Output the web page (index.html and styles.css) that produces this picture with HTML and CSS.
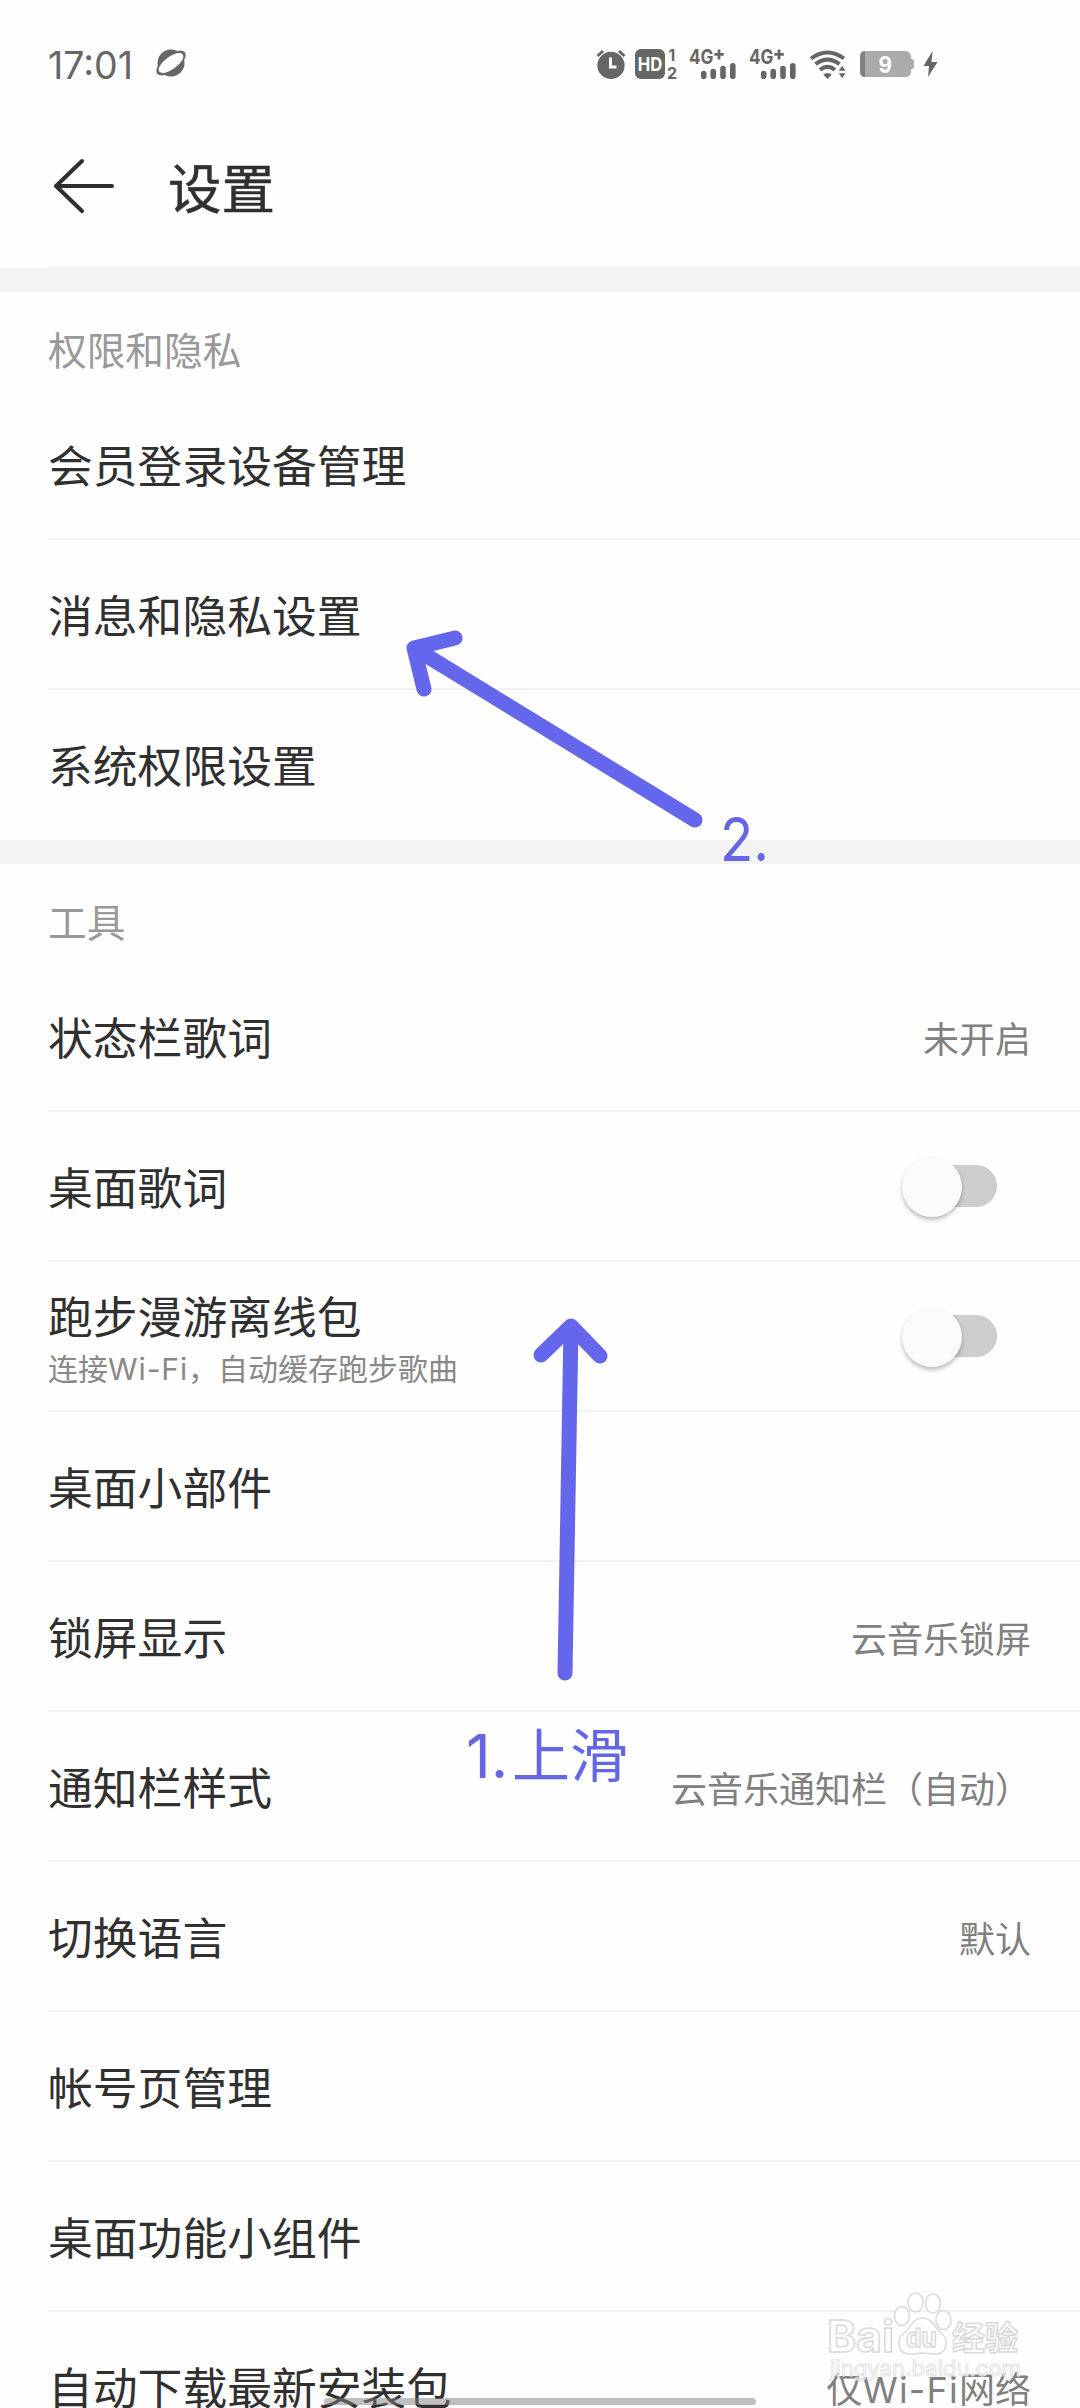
FILE: index.html
```html
<!DOCTYPE html>
<html lang="zh-CN">
<head>
    <meta charset="UTF-8">
    <meta name="viewport" content="width=device-width, initial-scale=1.0">
    <title>设置</title>
    <link rel="stylesheet" href="styles.css">
</head>
<body>
    <div class="status-bar">
        <span class="time">17:01</span>
        <svg class="planet" width="30" height="28" viewBox="0 0 30 28">
            <circle cx="15" cy="14" r="13.5" fill="#666"/>
            <ellipse cx="15" cy="14" rx="17.5" ry="8" transform="rotate(-38 15 14)" fill="#666"/>
            <ellipse cx="15" cy="14" rx="14.5" ry="6.3" transform="rotate(-36 15 14)" fill="#fff"/>
        </svg>
        <div class="status-icons">
            <svg class="alarm" width="30" height="30" viewBox="0 0 30 30">
                <circle cx="15" cy="16.4" r="13.6" fill="#666"/>
                <path d="M1.5 7L7 2M28.5 7L23 2" stroke="#666" stroke-width="3" fill="none"/>
                <path d="M14.5 8.5V18H20.5" stroke="#fff" stroke-width="3" fill="none"/>
            </svg>
            <svg class="hd" width="44" height="30" viewBox="0 0 44 30">
                <rect width="30" height="30" rx="6" fill="#666"/>
                <text x="2.7" y="21.6" font-size="18.5" textLength="24.5" lengthAdjust="spacingAndGlyphs" fill="#fff">HD</text>
                <text x="33.5" y="11.5" font-size="15.5">1</text>
                <text x="32" y="29.5" font-size="16">2</text>
            </svg>
            <svg class="signal" width="48" height="30" viewBox="0 0 48 30">
                <text x="0" y="14.5" font-size="20" textLength="24.5" lengthAdjust="spacingAndGlyphs">4G</text>
                <path d="M30 0.5V10.5M25.3 5.3H34.8" stroke="#666" stroke-width="2.8"/>
                <path d="M14.7 24.5V27.2M24.2 22.6V27.2M34 19.5V27.2M43.8 16.8V27.2" stroke="#666" stroke-width="5.6" stroke-linecap="round"/>
            </svg>
            <svg class="signal" width="48" height="30" viewBox="0 0 48 30">
                <text x="0" y="14.5" font-size="20" textLength="24.5" lengthAdjust="spacingAndGlyphs">4G</text>
                <path d="M30 0.5V10.5M25.3 5.3H34.8" stroke="#666" stroke-width="2.8"/>
                <path d="M14.7 24.5V27.2M24.2 22.6V27.2M34 19.5V27.2M43.8 16.8V27.2" stroke="#666" stroke-width="5.6" stroke-linecap="round"/>
            </svg>
            <svg class="wifi" width="36" height="30" viewBox="0 0 36 30">
                <path d="M1 9.5Q17.500 -2.500 34 9.500M5.500 15.200Q17.500 6 29.500 15.200M10 20.800Q17.500 15 25 20.800" fill="none" stroke="#666" stroke-width="4"/>
                <path d="M13.200 25.500Q17.500 22.500 21.800 25.500L17.500 30ZM28.800 21.700L32.200 16.800L35.600 21.700ZM28.800 24.300H35.600L32.200 29.200Z" fill="#666"/>
            </svg>
            <svg class="battery" width="54" height="28" viewBox="0 0 54 28">
                <path d="M6 1H45Q51 1 51 7V8.500Q54 9 54 12V16Q54 19 51 19.500V21Q51 27 45 27H6Q0 27 0 21V7Q0 1 6 1Z" fill="#ababab"/>
                <path d="M5 1V27Q0 27 0 21V7Q0 1 5 1Z" fill="#808080"/>
                <text x="18.500" y="22.500" font-size="23.500" textLength="13.500" lengthAdjust="spacingAndGlyphs" fill="#fff">9</text>
            </svg>
            <svg class="bolt" width="15" height="28" viewBox="0 0 15 28">
                <path d="M9.500 1L0.500 16H6L5 27L14.500 12H8.500Z" fill="#666"/>
            </svg>
        </div>
    </div>

    <div class="header">
        <svg class="back" width="62" height="56" viewBox="0 0 62 56">
            <path d="M29 3L3 28L29 53M3 28H59" fill="none" stroke="#2f2f2f" stroke-width="4" stroke-linecap="round" stroke-linejoin="round"/>
        </svg>
        <h1>设置</h1>
    </div>

    <div class="section">
        <h2>权限和隐私</h2>
        <div class="row"><span class="label">会员登录设备管理</span></div>
        <div class="row"><span class="label">消息和隐私设置</span></div>
        <div class="row"><span class="label">系统权限设置</span></div>
    </div>

    <div class="section">
        <h2>工具</h2>
        <div class="row">
            <span class="label">状态栏歌词</span>
            <span class="value">未开启</span>
        </div>
        <div class="row">
            <span class="label">桌面歌词</span>
            <span class="switch"></span>
        </div>
        <div class="row">
            <div class="label-group">
                <span class="label">跑步漫游离线包</span>
                <span class="desc">连接<span class="latin">Wi-Fi</span>，自动缓存跑步歌曲</span>
            </div>
            <span class="switch"></span>
        </div>
        <div class="row"><span class="label">桌面小部件</span></div>
        <div class="row">
            <span class="label">锁屏显示</span>
            <span class="value">云音乐锁屏</span>
        </div>
        <div class="row">
            <span class="label">通知栏样式</span>
            <span class="value">云音乐通知栏（自动）</span>
        </div>
        <div class="row">
            <span class="label">切换语言</span>
            <span class="value">默认</span>
        </div>
        <div class="row"><span class="label">帐号页管理</span></div>
        <div class="row"><span class="label">桌面功能小组件</span></div>
        <div class="row">
            <span class="label">自动下载最新安装包</span>
            <span class="value">仅<span class="latin">Wi-Fi</span>网络</span>
        </div>
    </div>

    <div class="home-bar"></div>

    <!-- arrows and step notes -->
    <svg class="notes" width="1080" height="2408" viewBox="0 0 1080 2408">
        <path d="M695 820L414 648M455 638L414 648L424 689"/>
        <path d="M565 1673L571 1326M541 1355L571 1326L600 1356"/>
        <text x="720" y="861" textLength="49" lengthAdjust="spacingAndGlyphs">2.</text>
        <text x="466" y="1778">1.</text>
        <text x="512" y="1777" class="cjk">上滑</text>
    </svg>

    <!-- watermark -->
    <svg class="watermark" width="210" height="110" viewBox="0 0 210 110">
        <g class="paw">
            <ellipse cx="82" cy="36" rx="7.500" ry="9.500"/>
            <ellipse cx="95.500" cy="22.500" rx="7.500" ry="9.500"/>
            <ellipse cx="113" cy="23.500" rx="7.500" ry="9.500"/>
            <ellipse cx="123.500" cy="40" rx="7.500" ry="9.500"/>
            <path d="M102 38C92 38 91 48 84 53C76 59 77 74 90 74C95 74 98 73 102 73C107 73 110 74 115 74C127 74 130 60 121 53C114 47 113 38 102 38Z"/>
        </g>
        <text x="7" y="72" font-size="44" textLength="67" lengthAdjust="spacingAndGlyphs">Bai</text>
        <text x="86" y="67" font-size="26" textLength="31" lengthAdjust="spacingAndGlyphs">du</text>
        <text x="132" y="70" font-size="33" class="cjk">经验</text>
        <text x="10" y="96" font-size="22" textLength="191" lengthAdjust="spacingAndGlyphs" class="url">jingyan.baidu.com</text>
    </svg>
</body>
</html>
```

FILE: styles.css
```css
* {
    box-sizing: border-box;
}
body {
    position: relative;
    margin: 0;
    width: 1080px;
    height: 2408px;
    overflow: hidden;
    background: #fefefe;
    color: #303030;
    font-family: Inter, "Noto Sans CJK SC", sans-serif;
}
svg {
    overflow: visible;
}
.status-bar {
    display: flex;
    align-items: center;
    height: 128px;
    padding: 0 142px 0 48px;
}
.time {
    width: 108px;
    padding-top: 2px;
    font-size: 37.5px;
    color: #666;
}
.planet {
    margin-bottom: 2px;
}
.status-icons {
    display: flex;
    align-items: center;
    margin-left: auto;
}
.status-icons text {
    font-family: Inter, sans-serif;
    font-weight: 700;
}
.status-icons text:not([fill]) {
    fill: #666;
}
.hd {
    margin-left: 9px;
}
.signal {
    margin-left: 10px;
}
.signal + .signal {
    margin-left: 12px;
}
.wifi {
    margin-left: 13px;
}
.battery {
    margin-left: 14px;
}
.bolt {
    margin-left: 9px;
}
.header {
    display: flex;
    align-items: center;
    height: 140px;
    padding: 0 0 24px 53px;
    background: linear-gradient(#f3f3f3, #f3f3f3) 48px 100% / 1032px 2px no-repeat;
}
h1 {
    margin: 7px 0 0 53px;
    font-size: 53.5px;
    font-weight: 400;
    line-height: 70px;
    -webkit-text-stroke: 0.5px #303030;
}
.section {
    border-top: 24px solid #f3f3f3;
}
h2 {
    margin: 0;
    padding-left: 48px;
    height: 98px;
    line-height: 119px;
    font-size: 38.7px;
    font-weight: 400;
    color: #999;
}
.row {
    display: flex;
    align-items: center;
    justify-content: space-between;
    height: 150px;
    margin-left: 48px;
    padding-right: 49px;
    border-bottom: 2px solid #f2f2f2;
}
.row:last-child {
    border-color: transparent;
}
.label {
    padding-top: 6px;
    font-size: 44.8px;
    line-height: 60px;
}
.label-group {
    display: flex;
    flex-direction: column;
}
.desc {
    font-size: 30px;
    line-height: 42px;
    color: #888;
}
.desc .latin {
    letter-spacing: 0.9px;
}
.value {
    padding-top: 1px;
    font-size: 36px;
    color: #808080;
}
.value .latin {
    letter-spacing: 1.2px;
}
.switch {
    position: relative;
    width: 84px;
    height: 42px;
    margin-right: 34px;
    border-radius: 21px;
    background: #cdcdcd;
}
.switch::before {
    content: "";
    position: absolute;
    left: -11px;
    top: -8px;
    width: 60px;
    height: 60px;
    border-radius: 50%;
    background: #fafafa;
    box-shadow: 0 3px 4px rgba(0, 0, 0, 0.25);
}
.home-bar {
    position: absolute;
    left: 324px;
    bottom: 3px;
    width: 432px;
    height: 7px;
    border-radius: 4px;
    background: rgba(128, 128, 128, 0.5);
}
.notes {
    position: absolute;
    left: 0;
    top: 0;
}
.notes path {
    fill: none;
    stroke: #6466ec;
    stroke-width: 15;
    stroke-linecap: round;
    stroke-linejoin: round;
}
.notes text {
    font-size: 61px;
    fill: #6466e4;
}
.notes .cjk {
    font-size: 58px;
}
.watermark {
    position: absolute;
    left: 820px;
    top: 2280px;
    fill: rgba(255, 255, 255, 0.75);
    stroke: #d9d9d9;
    stroke-width: 1.5;
}
.watermark text {
    font-family: Inter, sans-serif;
    font-weight: 700;
}
.watermark .cjk {
    font-family: "Noto Sans CJK SC", sans-serif;
}
.watermark .url {
    font-weight: 400;
    fill: rgba(255, 255, 255, 0.5);
    stroke: #e4e4e4;
    stroke-width: 1;
}
```
